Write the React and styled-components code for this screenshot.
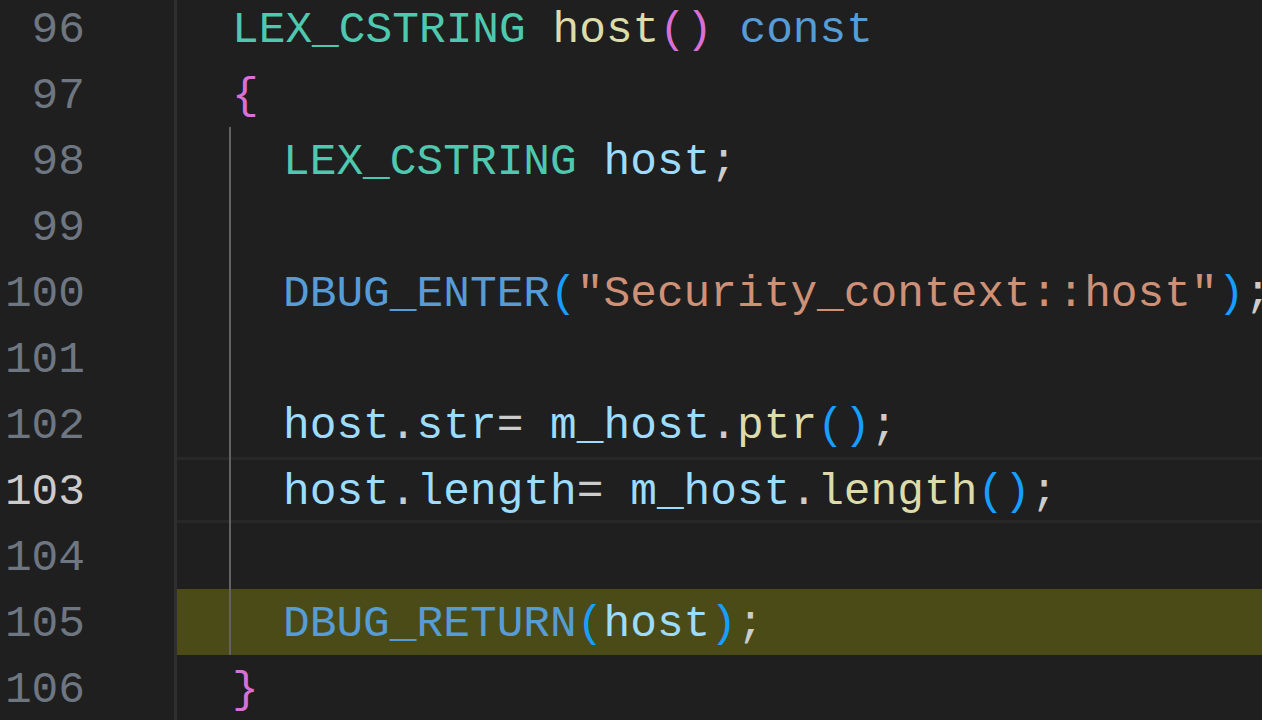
import React from "react";
import styled, { createGlobalStyle } from "styled-components";

const Global = createGlobalStyle`
  html, body { margin: 0; padding: 0; background: #1f1f1f; }
  #root { width: 1262px; height: 720px; }
`;

const palette = {
  type: "#4ec9b0",
  fn: "#dcdcaa",
  br1: "#da70d6",
  br2: "#179fff",
  kw: "#569cd6",
  macro: "#569cd6",
  var: "#9cdcfe",
  str: "#ce9178",
  punc: "#cccccc",
};

const Frame = styled.div`
  width: 1262px;
  height: 720px;
  overflow: hidden;
  background: #1f1f1f;
  font-family: "Liberation Mono", "DejaVu Sans Mono", monospace;
  font-size: 44.5px;
`;

const Lines = styled.div`
  display: flex;
  flex-direction: column;
  margin-top: -5px;
`;

const Row = styled.div`
  display: grid;
  grid-template-columns: 174px 1fr;
  height: 66px;
`;

const LineNo = styled.div`
  text-align: right;
  padding-right: 89px;
  padding-top: 3px;
  line-height: 64px;
  color: ${(p) => (p.$active ? "#cccccc" : "#6e7681")};
  white-space: pre;
`;

const Code = styled.div`
  display: flex;
  align-items: stretch;
  box-sizing: border-box;
  height: 66px;
  border-left: 3px solid #2f2f2f;
  padding-left: 52px;
  white-space: pre;
  background: ${(p) => (p.$hl ? "#4b4b18" : "transparent")};
  box-shadow: ${(p) =>
    p.$current ? "inset 0 3px 0 #282828, inset 0 -3px 0 #282828" : "none"};
`;

const Indent = styled.span`
  flex: none;
  width: ${(p) => (p.$guide ? "54px" : "3px")};
  box-sizing: border-box;
  border-left: ${(p) => (p.$guide ? "2px solid #626262" : "none")};
`;

const Text = styled.span`
  display: block;
  padding-top: 3px;
  line-height: 64px;
`;

const Tok = styled.span`
  color: ${(p) => palette[p.$k] || palette.punc};
`;

const lines = [
  { n: 96, guide: false, toks: [["type", "LEX_CSTRING"], ["punc", " "], ["fn", "host"], ["br1", "()"], ["punc", " "], ["kw", "const"]] },
  { n: 97, guide: false, toks: [["br1", "{"]] },
  { n: 98, guide: true, toks: [["type", "LEX_CSTRING"], ["punc", " "], ["var", "host"], ["punc", ";"]] },
  { n: 99, guide: true, toks: [] },
  { n: 100, guide: true, toks: [["macro", "DBUG_ENTER"], ["br2", "("], ["str", "\"Security_context::host\""], ["br2", ")"], ["punc", ";"]] },
  { n: 101, guide: true, toks: [] },
  { n: 102, guide: true, toks: [["var", "host"], ["punc", "."], ["var", "str"], ["punc", "= "], ["var", "m_host"], ["punc", "."], ["fn", "ptr"], ["br2", "()"], ["punc", ";"]] },
  { n: 103, guide: true, current: true, toks: [["var", "host"], ["punc", "."], ["var", "length"], ["punc", "= "], ["var", "m_host"], ["punc", "."], ["fn", "length"], ["br2", "()"], ["punc", ";"]] },
  { n: 104, guide: true, toks: [] },
  { n: 105, guide: true, hl: true, toks: [["macro", "DBUG_RETURN"], ["br2", "("], ["var", "host"], ["br2", ")"], ["punc", ";"]] },
  { n: 106, guide: false, toks: [["br1", "}"]] },
];

export default function App() {
  return (
    <Frame>
      <Global />
      <Lines>
        {lines.map((l) => (
          <Row key={l.n}>
            <LineNo $active={l.current}>{l.n}</LineNo>
            <Code $hl={l.hl} $current={l.current}>
              <Indent $guide={l.guide} />
              <Text>
                {l.toks.map(([k, t], i) => (
                  <Tok key={i} $k={k}>{t}</Tok>
                ))}
              </Text>
            </Code>
          </Row>
        ))}
      </Lines>
    </Frame>
  );
}
